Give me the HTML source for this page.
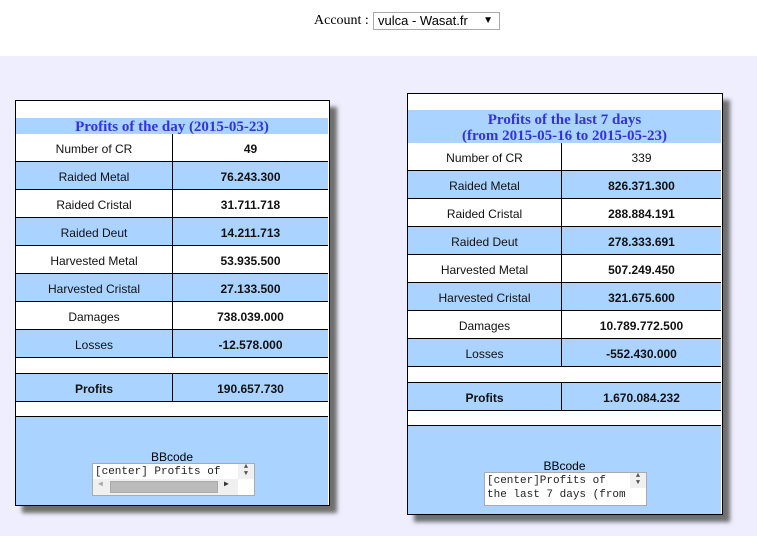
<!DOCTYPE html>
<html><head><style>
*{margin:0;padding:0;box-sizing:border-box}
body{width:757px;height:536px;background:#eeeeff;font-family:"Liberation Sans",sans-serif;position:relative;overflow:hidden}
.top{position:absolute;left:0;top:0;width:757px;height:56px;background:#fff}
.acc{position:absolute;left:314px;top:13px;font-family:"Liberation Serif",serif;font-size:14px;color:#000}
.sel{position:absolute;left:373px;top:12px;width:127px;height:18px;border:1px solid #a9a9a9;background:#fff;font-size:13px;padding:0 0 0 4px;line-height:16px}
.sel span{position:absolute;right:6px;top:0;font-size:10px}
.panel{position:absolute;border:1px solid #000;background:#fff;box-shadow:7px 7px 4px #6f6f6f}
.a{position:absolute;left:0}
.t{background:#aad4ff;color:#3333dd;font-family:"Liberation Serif",serif;font-weight:bold;font-size:15px;text-align:center;line-height:16px}
.r{height:28px;border-bottom:1px solid #000;font-size:12px;line-height:31px;color:#111}
.b{background:#aad4ff}
.r .k{position:absolute;left:0;top:0;height:27px;text-align:center;border-right:1px solid #000}
.r .v{position:absolute;top:0;text-align:center;font-weight:bold}
.bb{background:#aad4ff;text-align:center;font-size:12px}
.ta{position:absolute;background:#fff;border:1px solid #aaa;font-family:"Liberation Mono","DejaVu Sans Mono",monospace;font-size:11px;line-height:14px;text-align:left;padding:1px 2px;color:#222;overflow:hidden}
</style></head><body>
<div class="top"></div>
<div class="acc">Account :</div>
<div class="sel">vulca - Wasat.fr<span>▼</span></div>

<div class="panel" style="left:15px;top:100px;width:315px;height:406px">
 <div class="a t" style="top:17px;width:312px;height:16px;line-height:18px">Profits of the day (2015-05-23)</div>
 <div class="a r" style="top:33px;width:312px"><div class="k" style="width:157px">Number of CR</div><div class="v" style="left:157px;width:155px">49</div></div>
 <div class="a r b" style="top:61px;width:312px"><div class="k" style="width:157px">Raided Metal</div><div class="v" style="left:157px;width:155px">76.243.300</div></div>
 <div class="a r" style="top:89px;width:312px"><div class="k" style="width:157px">Raided Cristal</div><div class="v" style="left:157px;width:155px">31.711.718</div></div>
 <div class="a r b" style="top:117px;width:312px"><div class="k" style="width:157px">Raided Deut</div><div class="v" style="left:157px;width:155px">14.211.713</div></div>
 <div class="a r" style="top:145px;width:312px"><div class="k" style="width:157px">Harvested Metal</div><div class="v" style="left:157px;width:155px">53.935.500</div></div>
 <div class="a r b" style="top:173px;width:312px"><div class="k" style="width:157px">Harvested Cristal</div><div class="v" style="left:157px;width:155px">27.133.500</div></div>
 <div class="a r" style="top:201px;width:312px"><div class="k" style="width:157px">Damages</div><div class="v" style="left:157px;width:155px">738.039.000</div></div>
 <div class="a r b" style="top:229px;width:312px"><div class="k" style="width:157px">Losses</div><div class="v" style="left:157px;width:155px">-12.578.000</div></div>
 <div class="a" style="top:272px;width:312px;height:1px;background:#000"></div>
 <div class="a r b" style="top:273px;width:312px"><div class="k" style="width:157px;font-weight:bold">Profits</div><div class="v" style="left:157px;width:155px">190.657.730</div></div>
 <div class="a" style="top:315px;width:312px;height:1px;background:#000"></div>
 <div class="a bb" style="top:316px;width:312px;height:88px"><div style="position:absolute;top:33px;width:312px">BBcode</div>
  <div class="ta" style="left:76px;top:46px;width:163px;height:33px">[center] Profits of
   <div style="position:absolute;left:0;top:15px;width:145px;height:16px;background:#f0f0f0"><div style="position:absolute;left:17px;top:2px;width:108px;height:12px;background:#bbb;border:1px solid #aaa"></div><span style="position:absolute;left:5px;top:-1px;font-size:8px;color:#aaa">◀</span><span style="position:absolute;left:131px;top:-1px;font-size:8px;color:#333">▶</span></div>
   <div style="position:absolute;left:145px;top:0;width:16px;height:15px;background:#f0f0f0;font-size:7px;color:#555;text-align:center;line-height:7px">▲<br>▼</div>
  </div>
 </div>
</div>

<div class="panel" style="left:407px;top:93px;width:316px;height:422px">
 <div class="a t" style="top:16px;width:313px;height:33px;padding-top:2px">Profits of the last 7 days<br>(from 2015-05-16 to 2015-05-23)</div>
 <div class="a r" style="top:49px;width:313px"><div class="k" style="width:154px">Number of CR</div><div class="v" style="left:154px;width:159px;font-weight:normal">339</div></div>
 <div class="a r b" style="top:77px;width:313px"><div class="k" style="width:154px">Raided Metal</div><div class="v" style="left:154px;width:159px">826.371.300</div></div>
 <div class="a r" style="top:105px;width:313px"><div class="k" style="width:154px">Raided Cristal</div><div class="v" style="left:154px;width:159px">288.884.191</div></div>
 <div class="a r b" style="top:133px;width:313px"><div class="k" style="width:154px">Raided Deut</div><div class="v" style="left:154px;width:159px">278.333.691</div></div>
 <div class="a r" style="top:161px;width:313px"><div class="k" style="width:154px">Harvested Metal</div><div class="v" style="left:154px;width:159px">507.249.450</div></div>
 <div class="a r b" style="top:189px;width:313px"><div class="k" style="width:154px">Harvested Cristal</div><div class="v" style="left:154px;width:159px">321.675.600</div></div>
 <div class="a r" style="top:217px;width:313px"><div class="k" style="width:154px">Damages</div><div class="v" style="left:154px;width:159px">10.789.772.500</div></div>
 <div class="a r b" style="top:245px;width:313px"><div class="k" style="width:154px">Losses</div><div class="v" style="left:154px;width:159px">-552.430.000</div></div>
 <div class="a" style="top:288px;width:313px;height:1px;background:#000"></div>
 <div class="a r b" style="top:289px;width:313px"><div class="k" style="width:154px;font-weight:bold">Profits</div><div class="v" style="left:154px;width:159px">1.670.084.232</div></div>
 <div class="a" style="top:331px;width:313px;height:1px;background:#000"></div>
 <div class="a bb" style="top:332px;width:313px;height:88px"><div style="position:absolute;top:33px;width:313px">BBcode</div>
  <div class="ta" style="left:76px;top:46px;width:163px;height:34px">[center]Profits of<br>the last 7 days (from
   <div style="position:absolute;left:145px;top:0;width:16px;height:15px;background:#f0f0f0;font-size:7px;color:#555;text-align:center;line-height:7px">▲<br>▼</div>
  </div>
 </div>
</div>
</body></html>
